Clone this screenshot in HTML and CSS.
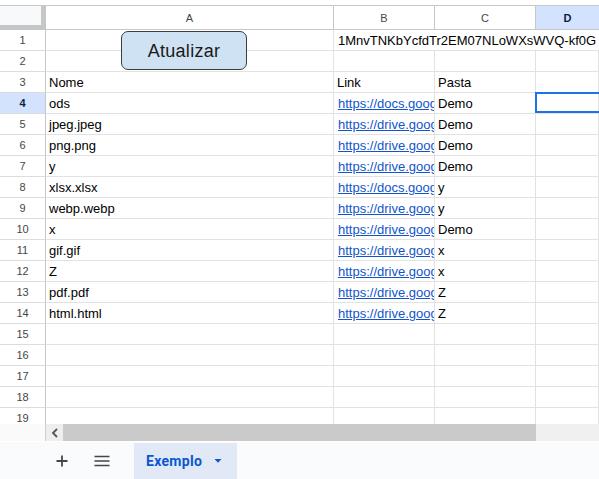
FILE: index.html
```html
<!DOCTYPE html>
<html>
<head>
<meta charset="utf-8">
<link rel="stylesheet" href="styles.css">
</head>
<body>
<div class="app">
  <div class="topstrip"></div>
  <div class="sheet">
    <div class="corner"></div>
    <div class="colhead">A</div>
    <div class="colhead">B</div>
    <div class="colhead">C</div>
    <div class="colhead active">D</div>

    <div class="rowhead">1</div><div class="cell"></div><div class="cell wide">1MnvTNKbYcfdTr2EM07NLoWXsWVQ-kf0G</div>
    <div class="rowhead">2</div><div class="cell"></div><div class="cell"></div><div class="cell"></div><div class="cell"></div>
    <div class="rowhead">3</div><div class="cell">Nome</div><div class="cell">Link</div><div class="cell">Pasta</div><div class="cell"></div>
    <div class="rowhead active">4</div><div class="cell">ods</div><div class="cell"><a class="link">https://docs.google.com</a></div><div class="cell">Demo</div><div class="cell selected"></div>
    <div class="rowhead">5</div><div class="cell">jpeg.jpeg</div><div class="cell"><a class="link">https://drive.google.com</a></div><div class="cell">Demo</div><div class="cell"></div>
    <div class="rowhead">6</div><div class="cell">png.png</div><div class="cell"><a class="link">https://drive.google.com</a></div><div class="cell">Demo</div><div class="cell"></div>
    <div class="rowhead">7</div><div class="cell">y</div><div class="cell"><a class="link">https://drive.google.com</a></div><div class="cell">Demo</div><div class="cell"></div>
    <div class="rowhead">8</div><div class="cell">xlsx.xlsx</div><div class="cell"><a class="link">https://docs.google.com</a></div><div class="cell">y</div><div class="cell"></div>
    <div class="rowhead">9</div><div class="cell">webp.webp</div><div class="cell"><a class="link">https://drive.google.com</a></div><div class="cell">y</div><div class="cell"></div>
    <div class="rowhead">10</div><div class="cell">x</div><div class="cell"><a class="link">https://drive.google.com</a></div><div class="cell">Demo</div><div class="cell"></div>
    <div class="rowhead">11</div><div class="cell">gif.gif</div><div class="cell"><a class="link">https://drive.google.com</a></div><div class="cell">x</div><div class="cell"></div>
    <div class="rowhead">12</div><div class="cell">Z</div><div class="cell"><a class="link">https://drive.google.com</a></div><div class="cell">x</div><div class="cell"></div>
    <div class="rowhead">13</div><div class="cell">pdf.pdf</div><div class="cell"><a class="link">https://drive.google.com</a></div><div class="cell">Z</div><div class="cell"></div>
    <div class="rowhead">14</div><div class="cell">html.html</div><div class="cell"><a class="link">https://drive.google.com</a></div><div class="cell">Z</div><div class="cell"></div>
    <div class="rowhead">15</div><div class="cell"></div><div class="cell"></div><div class="cell"></div><div class="cell"></div>
    <div class="rowhead">16</div><div class="cell"></div><div class="cell"></div><div class="cell"></div><div class="cell"></div>
    <div class="rowhead">17</div><div class="cell"></div><div class="cell"></div><div class="cell"></div><div class="cell"></div>
    <div class="rowhead">18</div><div class="cell"></div><div class="cell"></div><div class="cell"></div><div class="cell"></div>
    <div class="rowhead">19</div><div class="cell"></div><div class="cell"></div><div class="cell"></div><div class="cell"></div>

    <div class="btn">Atualizar</div>
  </div>
  <div class="hscroll">
    <div class="hs-left"></div>
    <div class="hs-btn">
      <svg width="8" height="10" viewBox="0 0 8 10"><path d="M6 1 L2 5 L6 9" fill="none" stroke="#555" stroke-width="1.8"/></svg>
    </div>
    <div class="hs-thumb"></div>
    <div class="hs-track"></div>
  </div>
  <div class="tabs">
    <div class="iconbtn">
      <svg width="12" height="12" viewBox="0 0 12 12"><path d="M6 0.5 V11.5 M0.5 6 H11.5" stroke="#444746" stroke-width="1.8"/></svg>
    </div>
    <div class="iconbtn">
      <svg width="16" height="12" viewBox="0 0 16 12"><path d="M0.5 1.5 H15.5 M0.5 6 H15.5 M0.5 10.5 H15.5" stroke="#444746" stroke-width="1.6"/></svg>
    </div>
    <div class="tab">
      <span class="tab-name">Exemplo</span>
      <svg class="caret" width="8" height="4" viewBox="0 0 8 4"><path d="M0.5 0 H7.5 L4 3.8 Z" fill="#0b57d0"/></svg>
    </div>
  </div>
</div>
</body>
</html>
```

FILE: styles.css
```css
* { box-sizing: border-box; }
html, body { margin: 0; padding: 0; }
body {
  width: 599px;
  height: 479px;
  overflow: hidden;
  background: #ffffff;
  font-family: Arial, "Liberation Sans", sans-serif;
}
.app { display: flex; flex-direction: column; width: 599px; height: 479px; }

.topstrip {
  height: 6px;
  flex: none;
  background: #ffffff;
  border-bottom: 1px solid #c7c7c7;
}

.sheet {
  position: relative;
  flex: none;
  height: 418px;
  overflow: hidden;
  display: grid;
  grid-template-columns: 46px 288px 101px 101px 63px;
  grid-template-rows: 24px;
  grid-auto-rows: 21px;
  font-size: 13px;
  color: #000000;
}

.corner {
  background: #f8f9fa;
  border-right: 5px solid #c4c7c5;
  border-bottom: 5px solid #c4c7c5;
}

.colhead {
  display: flex;
  align-items: center;
  justify-content: center;
  font-size: 11px;
  color: #444746;
  background: #ffffff;
  border-right: 1px solid #c7c7c7;
  border-bottom: 1px solid #c7c7c7;
}
.colhead.active {
  background: #d3e3fd;
  color: #0b1f44;
  font-weight: bold;
  border-right: none;
}

.rowhead {
  display: flex;
  align-items: center;
  justify-content: center;
  font-size: 11px;
  color: #444746;
  background: #ffffff;
  border-right: 1px solid #c7c7c7;
  border-bottom: 1px solid #dcdcdc;
}
.rowhead.active {
  background: #d3e3fd;
  color: #0b1f44;
  font-weight: bold;
}

.cell {
  position: relative;
  display: flex;
  align-items: flex-end;
  padding: 0 3px 1px 3px;
  line-height: 16px;
  white-space: nowrap;
  overflow: hidden;
  border-right: 1px solid #e2e2e2;
  border-bottom: 1px solid #e2e2e2;
}
.cell.wide {
  grid-column: span 3;
  overflow: visible;
  border-right: none;
  padding-left: 4px;
}
.cell.selected { overflow: visible; }
.cell.selected::after {
  content: "";
  position: absolute;
  top: -1px;
  left: -1px;
  right: -10px;
  bottom: 0;
  border: 2px solid #1a73e8;
}

.link {
  color: #1155cc;
  text-decoration: underline;
  padding-left: 1px;
}

.btn {
  position: absolute;
  left: 121px;
  top: 25px;
  width: 126px;
  height: 39px;
  display: flex;
  align-items: center;
  justify-content: center;
  background: #cfe2f3;
  border: 1px solid #3c3c3c;
  border-radius: 7px;
  font-size: 18px;
  letter-spacing: 0.3px;
  color: #1a1a1a;
  padding-top: 1px;
}

.hscroll {
  flex: none;
  height: 17px;
  display: flex;
}
.hs-left {
  width: 46px;
  background: #fafafa;
  border-right: 1px solid #d0d0d0;
}
.hs-btn {
  width: 17px;
  background: #eeeeee;
  display: flex;
  align-items: center;
  justify-content: center;
}
.hs-thumb {
  width: 473px;
  background: #cacaca;
}
.hs-track {
  flex: 1;
  background: #f0f0f0;
}

.tabs {
  flex: 1;
  display: flex;
  align-items: stretch;
  background: #f9fbfd;
  border-top: 1px solid #ffffff;
  padding-top: 1px;
  padding-left: 48px;
}
.iconbtn {
  width: 28px;
  display: flex;
  align-items: center;
  justify-content: center;
  margin-right: 12px;
}
.tab {
  margin-left: 6px;
  width: 103px;
  background: #e1e9f7;
  display: flex;
  align-items: center;
  padding-left: 12px;
  padding-bottom: 1px;
}
.tab-name {
  font-family: Roboto, "Open Sans", sans-serif;
  font-weight: bold;
  font-size: 14px;
  color: #0b57d0;
  letter-spacing: 0.3px;
}
.caret { margin-left: 12px; margin-top: 1px; }
```
